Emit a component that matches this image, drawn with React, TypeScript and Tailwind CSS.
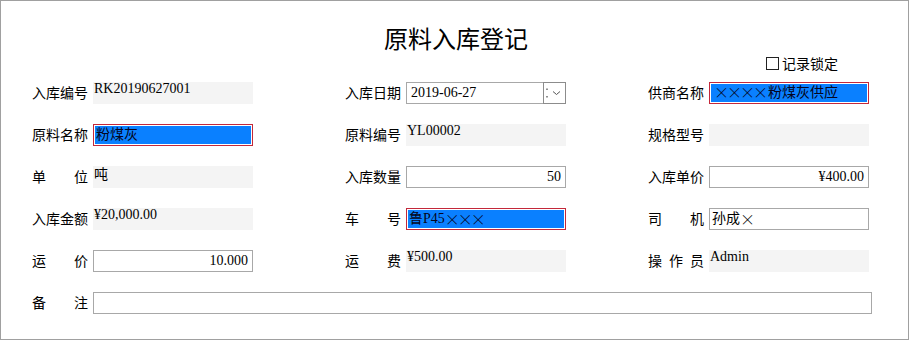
import React from "react";

const CJK = { fontFamily: '"Noto Sans CJK SC", sans-serif' };

function Label({ chars }: { chars: string[] }) {
  return (
    <div
      className="w-[56px] h-[20px] flex justify-between text-[14px] leading-[20px] text-black shrink-0"
      style={CJK}
    >
      {chars.map((c, i) => (
        <span key={i}>{c}</span>
      ))}
    </div>
  );
}

const valueFont = "font-['Liberation_Serif','Noto_Sans_CJK_SC',serif]";

function X({ n }: { n: number }) {
  return (
    <span className="text-[15px] font-light leading-[14px] tracking-[-2px]" style={CJK}>
      {"×".repeat(n)}
    </span>
  );
}

function Gray({ children }: { children?: React.ReactNode }) {
  return (
    <div
      className={`w-[160px] h-[22px] shrink-0 bg-[#f4f4f4] pl-[1px] text-[14px] leading-[14px] text-black ${valueFont}`}
    >
      {children}
    </div>
  );
}

function Boxed({
  children,
  right,
  w = "w-[160px]",
}: {
  children?: React.ReactNode;
  right?: boolean;
  w?: string;
}) {
  return (
    <div
      className={`${w} h-[22px] shrink-0 border border-[#a8a8a8] bg-white flex items-center px-[4px] text-[14px] leading-[14px] text-black ${valueFont} ${
        right ? "justify-end" : "justify-start"
      }`}
    >
      {children}
    </div>
  );
}

function Highlight({ children }: { children?: React.ReactNode }) {
  return (
    <div className="w-[160px] h-[22px] shrink-0 border border-[#c3283a] p-[1px] bg-white">
      <div
        className={`w-full h-full bg-[#0a80ff] flex items-center pl-[1px] text-[14px] leading-[14px] text-[#050520] ${valueFont}`}
      >
        {children}
      </div>
    </div>
  );
}

function Cell({ label, children }: { label: string[]; children: React.ReactNode }) {
  return (
    <div className="flex items-start gap-[5px] h-[22px]">
      <Label chars={label} />
      {children}
    </div>
  );
}

export default function App() {
  return (
    <div className="w-[910px] h-[341px] bg-white">
      <div className="w-[909px] h-[340px] border border-[#a0a0a0] bg-white flex flex-col">
        <div
          className="mt-[23px] h-[28px] text-[24px] leading-[28px] text-center text-black pl-[3px]"
          style={CJK}
        >
          原料入库登记
        </div>
        <div className="h-[22px] flex items-center justify-end pr-[70px]">
          <div className="w-[13px] h-[13px] border border-[#222] bg-white mr-[3px]" />
          <span className="text-[14px] leading-[20px] text-black" style={CJK}>
            记录锁定
          </span>
        </div>
        <div className="mt-[8px] pl-[31px] grid grid-cols-[313px_303px_221px] gap-y-[20px] auto-rows-[22px]">
          {/* Row 1 */}
          <Cell label={["入", "库", "编", "号"]}>
            <Gray>RK20190627001</Gray>
          </Cell>
          <Cell label={["入", "库", "日", "期"]}>
            <div className="flex shrink-0">
              <Boxed w="w-[138px]">2019-06-27</Boxed>
              <div className="w-[23px] h-[22px] -ml-[1px] border border-[#8c8c8c] bg-white relative">
                <svg width="23" height="22" viewBox="0 0 23 22" className="absolute -left-[1px] -top-[1px]">
                  <rect x="3.5" y="6.5" width="1" height="1.5" fill="#222" />
                  <rect x="3.5" y="14" width="1" height="1.5" fill="#222" />
                  <path d="M10 9.5 L13.5 12.5 L17 9.5" stroke="#555" strokeWidth="1" fill="none" />
                </svg>
              </div>
            </div>
          </Cell>
          <Cell label={["供", "商", "名", "称"]}>
            <Highlight>
              <span className="pl-[2px]">
                <X n={4} />
              </span>
              <span className="ml-[2px]">粉煤灰供应</span>
            </Highlight>
          </Cell>

          {/* Row 2 */}
          <Cell label={["原", "料", "名", "称"]}>
            <Highlight>粉煤灰</Highlight>
          </Cell>
          <Cell label={["原", "料", "编", "号"]}>
            <Gray>YL00002</Gray>
          </Cell>
          <Cell label={["规", "格", "型", "号"]}>
            <Gray />
          </Cell>

          {/* Row 3 */}
          <Cell label={["单", "位"]}>
            <Gray>
              <span className="relative top-[2px]">吨</span>
            </Gray>
          </Cell>
          <Cell label={["入", "库", "数", "量"]}>
            <Boxed right>50</Boxed>
          </Cell>
          <Cell label={["入", "库", "单", "价"]}>
            <Boxed right>¥400.00</Boxed>
          </Cell>

          {/* Row 4 */}
          <Cell label={["入", "库", "金", "额"]}>
            <Gray>¥20,000.00</Gray>
          </Cell>
          <Cell label={["车", "号"]}>
            <Highlight>
              <span>鲁P45</span>
              <X n={3} />
            </Highlight>
          </Cell>
          <Cell label={["司", "机"]}>
            <Boxed>
              <span className="-ml-[2px]">孙成</span>
              <X n={1} />
            </Boxed>
          </Cell>

          {/* Row 5 */}
          <Cell label={["运", "价"]}>
            <Boxed right>10.000</Boxed>
          </Cell>
          <Cell label={["运", "费"]}>
            <Gray>¥500.00</Gray>
          </Cell>
          <Cell label={["操", "作", "员"]}>
            <Gray>Admin</Gray>
          </Cell>

          {/* Row 6 */}
          <div className="col-span-3">
            <Cell label={["备", "注"]}>
              <Boxed w="w-[779px]" />
            </Cell>
          </div>
        </div>
      </div>
    </div>
  );
}
